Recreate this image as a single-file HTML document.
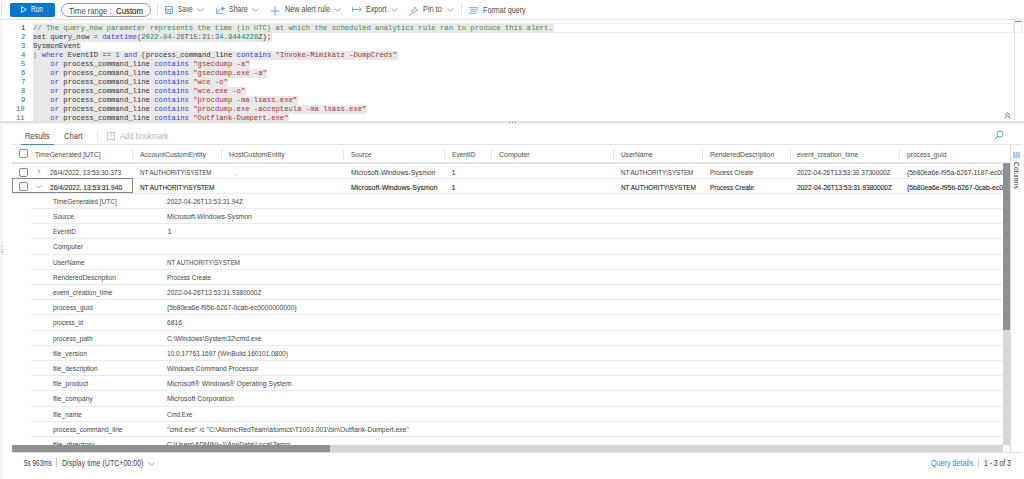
<!DOCTYPE html>
<html><head><meta charset="utf-8"><title>Logs</title>
<style>
html,body{margin:0;padding:0;width:1024px;height:479px;overflow:hidden;background:#fff;font-family:"Liberation Sans",sans-serif;color:#323130;position:relative}
.a{position:absolute;white-space:pre}
.b{position:absolute}
.m{font-family:"Liberation Mono",monospace}
</style></head><body>
<div class="b" style="left:1.00px;top:4.00px;width:1.00px;height:12.00px;background:#dddcdb"></div>
<div class="b" style="left:10.00px;top:3.00px;width:45.00px;height:14.00px;background:#0078d4;border-radius:2px"></div>
<svg class="b" style="left:20.5px;top:6px" width="6" height="7" viewBox="0 0 6 7"><path d="M0.6 0.6 L5.4 3.5 L0.6 6.4 Z" fill="none" stroke="#fff" stroke-width="0.9" stroke-linejoin="round"/></svg>
<div class="a" style="left:31.00px;top:2.76px;font-size:8.2px;line-height:14px;color:#fff;transform:scaleX(0.778);transform-origin:0 0;">Run</div>
<div class="b" style="left:61.00px;top:3.00px;width:89.50px;height:13.70px;border:1px solid #9a9896;border-radius:8px;box-sizing:border-box"></div>
<div class="a" style="left:68.70px;top:4.29px;font-size:8.4px;line-height:14px;color:#4a4948;transform:scaleX(0.910);transform-origin:0 0;">Time range :</div>
<div class="a" style="left:116.00px;top:4.29px;font-size:8.4px;line-height:14px;color:#323130;-webkit-text-stroke:0.15px #323130;transform:scaleX(0.932);transform-origin:0 0;">Custom</div>
<div class="b" style="left:156.50px;top:4.50px;width:1.00px;height:11.00px;background:#e1dfdd"></div>
<svg class="b" style="left:165px;top:5.8px" width="8" height="8" viewBox="0 0 8 8"><path d="M0.5 0.5 H7.5 V7.5 H0.5 Z M0.5 3.4 H7.5 M2.2 7.5 V5.4 H5.8 V7.5" fill="none" stroke="#5b9de0" stroke-width="0.9"/></svg>
<div class="a" style="left:178.10px;top:2.76px;font-size:8.2px;line-height:14px;color:#4a4948;transform:scaleX(0.787);transform-origin:0 0;">Save</div>
<svg class="b" style="left:197.2px;top:8.2px" width="7" height="4" viewBox="0 0 7 4"><path d="M0.5 0.5 L3.5 3.3 L6.5 0.5" fill="none" stroke="#8a8886" stroke-width="0.8"/></svg>
<svg class="b" style="left:215.8px;top:5.6px" width="9.5" height="8" viewBox="0 0 9.5 8"><path d="M0.5 2.5 V7.4 H7.5 M2.2 6 C2.6 3.8 4.4 2.7 7 2.7" fill="none" stroke="#5b9de0" stroke-width="0.9"/><path d="M5.6 0.4 L9.2 2.7 L5.6 5 Z" fill="#5b9de0"/></svg>
<div class="a" style="left:229.00px;top:2.76px;font-size:8.2px;line-height:14px;color:#4a4948;transform:scaleX(0.855);transform-origin:0 0;">Share</div>
<svg class="b" style="left:252.2px;top:8.2px" width="7" height="4" viewBox="0 0 7 4"><path d="M0.5 0.5 L3.5 3.3 L6.5 0.5" fill="none" stroke="#8a8886" stroke-width="0.8"/></svg>
<svg class="b" style="left:270px;top:5.5px" width="10" height="10" viewBox="0 0 10 10"><path d="M5 0.5 V9.5 M0.5 5 H9.5" fill="none" stroke="#5b9de0" stroke-width="0.9"/></svg>
<div class="a" style="left:284.50px;top:2.76px;font-size:8.2px;line-height:14px;color:#4a4948;transform:scaleX(0.891);transform-origin:0 0;">New alert rule</div>
<svg class="b" style="left:334.4px;top:8.2px" width="7" height="4" viewBox="0 0 7 4"><path d="M0.5 0.5 L3.5 3.3 L6.5 0.5" fill="none" stroke="#8a8886" stroke-width="0.8"/></svg>
<svg class="b" style="left:352px;top:7.2px" width="10" height="5" viewBox="0 0 10 5"><path d="M0.5 0.3 V4.7 M0.5 2.5 H9.2 M7 0.4 L9.2 2.5 L7 4.6" fill="none" stroke="#5b9de0" stroke-width="0.85"/></svg>
<div class="a" style="left:366.20px;top:2.76px;font-size:8.2px;line-height:14px;color:#4a4948;transform:scaleX(0.866);transform-origin:0 0;">Export</div>
<svg class="b" style="left:391.0px;top:8.2px" width="7" height="4" viewBox="0 0 7 4"><path d="M0.5 0.5 L3.5 3.3 L6.5 0.5" fill="none" stroke="#8a8886" stroke-width="0.8"/></svg>
<svg class="b" style="left:409px;top:5.5px" width="10" height="10" viewBox="0 0 10 10"><path d="M0.5 9.5 L3.5 6.5 M2 4.5 L5.5 8 M3 5.5 L6 2.5 L5.5 1 L9 4.5 L7.5 4 L4.5 7" fill="none" stroke="#5b9de0" stroke-width="0.9"/></svg>
<div class="a" style="left:423.00px;top:2.76px;font-size:8.2px;line-height:14px;color:#4a4948;transform:scaleX(0.898);transform-origin:0 0;">Pin to</div>
<svg class="b" style="left:446.8px;top:8.2px" width="7" height="4" viewBox="0 0 7 4"><path d="M0.5 0.5 L3.5 3.3 L6.5 0.5" fill="none" stroke="#8a8886" stroke-width="0.8"/></svg>
<div class="b" style="left:460.60px;top:4.60px;width:1.00px;height:10.60px;background:#e1dfdd"></div>
<svg class="b" style="left:468px;top:6.5px" width="11" height="7" viewBox="0 0 11 7"><path d="M0.5 0.6 H10.5 M2.5 2.4 H10 M2.5 4.2 H8.5 M0.5 6.2 H8.5" fill="none" stroke="#5b9de0" stroke-width="0.8"/></svg>
<div class="a" style="left:483.00px;top:3.76px;font-size:8.2px;line-height:14px;color:#4a4948;transform:scaleX(0.877);transform-origin:0 0;">Format query</div>
<div class="b" style="left:0.00px;top:19.20px;width:1022.00px;height:1.00px;background:#e1dfdd"></div>
<div class="b" style="left:0.00px;top:20.20px;width:3.40px;height:458.80px;background:#f3f3f3"></div>
<div class="b" style="left:1014.00px;top:23.30px;width:8.00px;height:9.30px;border:1px solid #efefef;border-left:none;box-sizing:border-box"></div>
<div class="b" style="left:1014.00px;top:20.20px;width:1.00px;height:101.00px;background:#e1dfdd"></div>
<div class="b" style="left:1015.00px;top:21.00px;width:7.00px;height:1.00px;background:#8a8886"></div>
<div class="b" style="left:0;top:20.2px;width:1014px;height:101.0px;overflow:hidden">
<div class="b" style="left:33.40px;top:3.10px;width:980.60px;height:9.30px;border:1px solid #efefef;box-sizing:border-box"></div>
<div class="b" style="left:33.4px;top:3.50px;width:520.20px;height:9.0px;background:#e8e8e8"></div>
<div class="b" style="left:33.4px;top:12.50px;width:238.43px;height:9.0px;background:#e8e8e8"></div>
<div class="b" style="left:33.4px;top:21.50px;width:47.69px;height:9.0px;background:#e8e8e8"></div>
<div class="b" style="left:33.4px;top:30.50px;width:364.14px;height:9.0px;background:#e8e8e8"></div>
<div class="b" style="left:33.4px;top:39.50px;width:216.75px;height:9.0px;background:#e8e8e8"></div>
<div class="b" style="left:33.4px;top:48.50px;width:234.09px;height:9.0px;background:#e8e8e8"></div>
<div class="b" style="left:33.4px;top:57.50px;width:195.07px;height:9.0px;background:#e8e8e8"></div>
<div class="b" style="left:33.4px;top:66.50px;width:212.41px;height:9.0px;background:#e8e8e8"></div>
<div class="b" style="left:33.4px;top:75.50px;width:264.44px;height:9.0px;background:#e8e8e8"></div>
<div class="b" style="left:33.4px;top:84.50px;width:333.80px;height:9.0px;background:#e8e8e8"></div>
<div class="b" style="left:33.4px;top:93.50px;width:255.76px;height:9.0px;background:#e8e8e8"></div>
<div class="a m" style="left:33.4px;top:3.00px;font-size:7.900px;line-height:9.0px;transform:scaleX(0.9144);transform-origin:0 0"><span style="color:#3f8f3f">// The query_now parameter represents the time (in UTC) at which the scheduled analytics rule ran to produce this alert.</span></div>
<div class="a m" style="left:20.66px;top:3.00px;font-size:7.900px;line-height:9.0px;color:#0b216f;transform:scaleX(0.9144);transform-origin:0 0">1</div>
<div class="a m" style="left:33.4px;top:12.00px;font-size:7.900px;line-height:9.0px;transform:scaleX(0.9144);transform-origin:0 0"><span style="color:#333">set query_now = </span><span style="color:#3b3bf2">datetime</span><span style="color:#333">(</span><span style="color:#0f8a6a">2022-04-26</span><span style="color:#333">T</span><span style="color:#0f8a6a">15</span><span style="color:#b03030">:</span><span style="color:#0f8a6a">21</span><span style="color:#b03030">:</span><span style="color:#0f8a6a">34.9444228</span><span style="color:#333">Z);</span></div>
<div class="a m" style="left:20.66px;top:12.00px;font-size:7.900px;line-height:9.0px;color:#237893;transform:scaleX(0.9144);transform-origin:0 0">2</div>
<div class="a m" style="left:33.4px;top:21.00px;font-size:7.900px;line-height:9.0px;transform:scaleX(0.9144);transform-origin:0 0"><span style="color:#333">SysmonEvent</span></div>
<div class="a m" style="left:20.66px;top:21.00px;font-size:7.900px;line-height:9.0px;color:#237893;transform:scaleX(0.9144);transform-origin:0 0">3</div>
<div class="a m" style="left:33.4px;top:30.00px;font-size:7.900px;line-height:9.0px;transform:scaleX(0.9144);transform-origin:0 0"><span style="color:#8050c0">| </span><span style="color:#3b3bf2">where</span><span style="color:#333"> EventID == </span><span style="color:#0f8a6a">1</span><span style="color:#333"> </span><span style="color:#3b3bf2">and</span><span style="color:#333"> (process_command_line </span><span style="color:#3b3bf2">contains</span><span style="color:#b03030"> &quot;Invoke-Mimikatz -DumpCreds&quot;</span></div>
<div class="a m" style="left:20.66px;top:30.00px;font-size:7.900px;line-height:9.0px;color:#237893;transform:scaleX(0.9144);transform-origin:0 0">4</div>
<div class="a m" style="left:33.4px;top:39.00px;font-size:7.900px;line-height:9.0px;transform:scaleX(0.9144);transform-origin:0 0"><span style="color:#333">    </span><span style="color:#3b3bf2">or</span><span style="color:#333"> process_command_line </span><span style="color:#3b3bf2">contains</span><span style="color:#b03030"> &quot;gsecdump -a&quot;</span></div>
<div class="a m" style="left:20.66px;top:39.00px;font-size:7.900px;line-height:9.0px;color:#237893;transform:scaleX(0.9144);transform-origin:0 0">5</div>
<div class="a m" style="left:33.4px;top:48.00px;font-size:7.900px;line-height:9.0px;transform:scaleX(0.9144);transform-origin:0 0"><span style="color:#333">    </span><span style="color:#3b3bf2">or</span><span style="color:#333"> process_command_line </span><span style="color:#3b3bf2">contains</span><span style="color:#b03030"> &quot;gsecdump.exe -a&quot;</span></div>
<div class="a m" style="left:20.66px;top:48.00px;font-size:7.900px;line-height:9.0px;color:#237893;transform:scaleX(0.9144);transform-origin:0 0">6</div>
<div class="a m" style="left:33.4px;top:57.00px;font-size:7.900px;line-height:9.0px;transform:scaleX(0.9144);transform-origin:0 0"><span style="color:#333">    </span><span style="color:#3b3bf2">or</span><span style="color:#333"> process_command_line </span><span style="color:#3b3bf2">contains</span><span style="color:#b03030"> &quot;wce -o&quot;</span></div>
<div class="a m" style="left:20.66px;top:57.00px;font-size:7.900px;line-height:9.0px;color:#237893;transform:scaleX(0.9144);transform-origin:0 0">7</div>
<div class="a m" style="left:33.4px;top:66.00px;font-size:7.900px;line-height:9.0px;transform:scaleX(0.9144);transform-origin:0 0"><span style="color:#333">    </span><span style="color:#3b3bf2">or</span><span style="color:#333"> process_command_line </span><span style="color:#3b3bf2">contains</span><span style="color:#b03030"> &quot;wce.exe -o&quot;</span></div>
<div class="a m" style="left:20.66px;top:66.00px;font-size:7.900px;line-height:9.0px;color:#237893;transform:scaleX(0.9144);transform-origin:0 0">8</div>
<div class="a m" style="left:33.4px;top:75.00px;font-size:7.900px;line-height:9.0px;transform:scaleX(0.9144);transform-origin:0 0"><span style="color:#333">    </span><span style="color:#3b3bf2">or</span><span style="color:#333"> process_command_line </span><span style="color:#3b3bf2">contains</span><span style="color:#b03030"> &quot;procdump -ma lsass.exe&quot;</span></div>
<div class="a m" style="left:20.66px;top:75.00px;font-size:7.900px;line-height:9.0px;color:#237893;transform:scaleX(0.9144);transform-origin:0 0">9</div>
<div class="a m" style="left:33.4px;top:84.00px;font-size:7.900px;line-height:9.0px;transform:scaleX(0.9144);transform-origin:0 0"><span style="color:#333">    </span><span style="color:#3b3bf2">or</span><span style="color:#333"> process_command_line </span><span style="color:#3b3bf2">contains</span><span style="color:#b03030"> &quot;procdump.exe -accepteula -ma lsass.exe&quot;</span></div>
<div class="a m" style="left:16.33px;top:84.00px;font-size:7.900px;line-height:9.0px;color:#237893;transform:scaleX(0.9144);transform-origin:0 0">10</div>
<div class="a m" style="left:33.4px;top:93.00px;font-size:7.900px;line-height:9.0px;transform:scaleX(0.9144);transform-origin:0 0"><span style="color:#333">    </span><span style="color:#3b3bf2">or</span><span style="color:#333"> process_command_line </span><span style="color:#3b3bf2">contains</span><span style="color:#b03030"> &quot;Outflank-Dumpert.exe&quot;</span></div>
<div class="a m" style="left:16.33px;top:93.00px;font-size:7.900px;line-height:9.0px;color:#237893;transform:scaleX(0.9144);transform-origin:0 0">11</div>
</div>
<svg class="b" style="left:1003.5px;top:111.5px" width="7" height="7" viewBox="0 0 7 7"><path d="M0.8 3.5 L3.5 1 L6.2 3.5 M0.8 6.2 L3.5 3.7 L6.2 6.2" fill="none" stroke="#605e5c" stroke-width="0.9"/></svg>
<div class="b" style="left:0;top:121.2px;width:1024px;height:3.6px;background:linear-gradient(#dadada,#f2f2f2 70%,#fff)"></div>
<div class="b" style="left:508.60px;top:122.00px;width:1.20px;height:1.20px;background:#7a7a7a;border-radius:1px"></div>
<div class="b" style="left:511.70px;top:122.00px;width:1.20px;height:1.20px;background:#7a7a7a;border-radius:1px"></div>
<div class="b" style="left:514.70px;top:122.00px;width:1.20px;height:1.20px;background:#7a7a7a;border-radius:1px"></div>
<div class="b" style="left:0.90px;top:245.70px;width:2.10px;height:1.40px;background:#c6c6c6"></div>
<div class="b" style="left:0.90px;top:248.60px;width:2.10px;height:1.40px;background:#c6c6c6"></div>
<div class="b" style="left:0.90px;top:251.40px;width:2.10px;height:1.40px;background:#c6c6c6"></div>
<div class="a" style="left:25.30px;top:129.49px;font-size:8.4px;line-height:14px;color:#484644;transform:scaleX(0.884);transform-origin:0 0;">Results</div>
<div class="a" style="left:63.80px;top:129.49px;font-size:8.4px;line-height:14px;color:#484644;transform:scaleX(0.908);transform-origin:0 0;">Chart</div>
<div class="b" style="left:97.20px;top:130.70px;width:1.00px;height:10.90px;background:#e6e4e2"></div>
<svg class="b" style="left:106.6px;top:132.2px" width="8" height="9" viewBox="0 0 8 9"><path d="M0.5 0.5 H7.5 V8.5 L4 6.6 L0.5 8.5 Z" fill="none" stroke="#c0bebc" stroke-width="0.9"/><circle cx="4" cy="3.2" r="1.2" fill="none" stroke="#c0bebc" stroke-width="0.7"/></svg>
<div class="a" style="left:119.70px;top:129.49px;font-size:8.4px;line-height:14px;color:#b8b6b4;transform:scaleX(0.894);transform-origin:0 0;">Add bookmark</div>
<svg class="b" style="left:993.5px;top:130px" width="10" height="10" viewBox="0 0 10 10"><circle cx="6" cy="4" r="3.1" fill="none" stroke="#4596de" stroke-width="0.9"/><path d="M3.8 6.2 L0.7 9.3" stroke="#4596de" stroke-width="1"/></svg>
<div class="b" style="left:12.00px;top:144.20px;width:1010.00px;height:1.00px;background:#e8e6e4"></div>
<div class="b" style="left:20.70px;top:143.70px;width:33.80px;height:1.50px;background:#3d8fdb"></div>
<div class="b" style="left:1010.00px;top:145.00px;width:1.00px;height:307.50px;background:#dcdcdc"></div>
<div class="b" style="left:12.00px;top:162.40px;width:991.00px;height:1.30px;background:#e1e2e3"></div>
<div class="b" style="left:0;top:0;width:1003px;height:479px;overflow:hidden">
<div class="a" style="left:34.80px;top:148.04px;font-size:7.4px;line-height:14px;color:#4e4d4c;transform:scaleX(0.906);transform-origin:0 0;">TimeGenerated [UTC]</div>
<div class="a" style="left:139.60px;top:148.04px;font-size:7.4px;line-height:14px;color:#4e4d4c;transform:scaleX(0.933);transform-origin:0 0;">AccountCustomEntity</div>
<div class="a" style="left:228.70px;top:148.04px;font-size:7.4px;line-height:14px;color:#4e4d4c;transform:scaleX(0.942);transform-origin:0 0;">HostCustomEntity</div>
<div class="a" style="left:350.50px;top:148.04px;font-size:7.4px;line-height:14px;color:#4e4d4c;transform:scaleX(0.875);transform-origin:0 0;">Source</div>
<div class="a" style="left:451.60px;top:148.04px;font-size:7.4px;line-height:14px;color:#4e4d4c;transform:scaleX(0.890);transform-origin:0 0;">EventID</div>
<div class="a" style="left:498.50px;top:148.04px;font-size:7.4px;line-height:14px;color:#4e4d4c;transform:scaleX(0.946);transform-origin:0 0;">Computer</div>
<div class="a" style="left:620.50px;top:148.04px;font-size:7.4px;line-height:14px;color:#4e4d4c;transform:scaleX(0.900);transform-origin:0 0;">UserName</div>
<div class="a" style="left:709.70px;top:148.04px;font-size:7.4px;line-height:14px;color:#4e4d4c;transform:scaleX(0.925);transform-origin:0 0;">RenderedDescription</div>
<div class="a" style="left:797.10px;top:148.04px;font-size:7.4px;line-height:14px;color:#4e4d4c;transform:scaleX(0.919);transform-origin:0 0;">event_creation_time</div>
<div class="a" style="left:907.00px;top:148.04px;font-size:7.4px;line-height:14px;color:#4e4d4c;transform:scaleX(0.896);transform-origin:0 0;">process_guid</div>
<div class="b" style="left:132.10px;top:150.00px;width:1.00px;height:8.50px;background:#e1dfdd"></div>
<div class="b" style="left:221.00px;top:150.00px;width:1.00px;height:8.50px;background:#e1dfdd"></div>
<div class="b" style="left:342.70px;top:150.00px;width:1.00px;height:8.50px;background:#e1dfdd"></div>
<div class="b" style="left:443.80px;top:150.00px;width:1.00px;height:8.50px;background:#e1dfdd"></div>
<div class="b" style="left:491.20px;top:150.00px;width:1.00px;height:8.50px;background:#e1dfdd"></div>
<div class="b" style="left:612.90px;top:150.00px;width:1.00px;height:8.50px;background:#e1dfdd"></div>
<div class="b" style="left:701.60px;top:150.00px;width:1.00px;height:8.50px;background:#e1dfdd"></div>
<div class="b" style="left:789.80px;top:150.00px;width:1.00px;height:8.50px;background:#e1dfdd"></div>
<div class="b" style="left:899.10px;top:150.00px;width:1.00px;height:8.50px;background:#e1dfdd"></div>
<div class="b" style="left:18.50px;top:149.40px;width:9.10px;height:9.00px;border:1px solid #8a8886;border-radius:2px;box-sizing:border-box"></div>
<div class="b" style="left:18.50px;top:167.80px;width:9.10px;height:9.00px;border:1px solid #8a8886;border-radius:2px;box-sizing:border-box"></div>
<svg class="b" style="left:36.6px;top:168.9px" width="4" height="5" viewBox="0 0 4 5"><path d="M0.6 0.4 L3.2 2.5 L0.6 4.6" fill="none" stroke="#797775" stroke-width="0.75"/></svg>
<div class="a" style="left:50.30px;top:165.70px;font-size:7.5px;line-height:14px;color:#3b3a39;transform:scaleX(0.875);transform-origin:0 0;">26/4/2022, 13:53:30.373</div>
<div class="a" style="left:139.60px;top:165.70px;font-size:7.5px;line-height:14px;color:#3b3a39;transform:scaleX(0.813);transform-origin:0 0;">NT AUTHORITY\SYSTEM</div>
<div class="a" style="left:350.50px;top:165.70px;font-size:7.5px;line-height:14px;color:#3b3a39;transform:scaleX(0.908);transform-origin:0 0;">Microsoft-Windows-Sysmon</div>
<div class="a" style="left:451.60px;top:165.70px;font-size:7.5px;line-height:14px;color:#3b3a39;">1</div>
<div class="a" style="left:620.50px;top:165.70px;font-size:7.5px;line-height:14px;color:#3b3a39;transform:scaleX(0.822);transform-origin:0 0;">NT AUTHORITY\SYSTEM</div>
<div class="a" style="left:709.70px;top:165.70px;font-size:7.5px;line-height:14px;color:#3b3a39;transform:scaleX(0.834);transform-origin:0 0;">Process Create</div>
<div class="a" style="left:797.10px;top:165.70px;font-size:7.5px;line-height:14px;color:#3b3a39;transform:scaleX(0.866);transform-origin:0 0;">2022-04-26T13:53:30.3730000Z</div>
<div class="a" style="left:907.00px;top:165.70px;font-size:7.5px;line-height:14px;color:#3b3a39;transform:scaleX(0.892);transform-origin:0 0;">{5b80ea6e-f95a-6267-1187-ec0000000000}</div>
<div class="b" style="left:12.00px;top:177.50px;width:991.00px;height:1.00px;background:#edebe9"></div>
<div class="b" style="left:234.80px;top:174.60px;width:1.00px;height:1.00px;background:#c8c6c4"></div>
<div class="b" style="left:18.50px;top:182.40px;width:9.10px;height:9.00px;border:1px solid #8a8886;border-radius:2px;box-sizing:border-box"></div>
<svg class="b" style="left:36px;top:184.6px" width="5.5" height="3.6" viewBox="0 0 5.5 3.6"><path d="M0.4 0.5 L2.75 3 L5.1 0.5" fill="none" stroke="#797775" stroke-width="0.75"/></svg>
<div class="a" style="left:50.30px;top:181.00px;font-size:7.5px;line-height:14px;color:#201f1e;-webkit-text-stroke:0.1px #201f1e;transform:scaleX(0.887);transform-origin:0 0;">26/4/2022, 13:53:31.940</div>
<div class="a" style="left:139.60px;top:181.00px;font-size:7.5px;line-height:14px;color:#201f1e;-webkit-text-stroke:0.1px #201f1e;transform:scaleX(0.847);transform-origin:0 0;">NT AUTHORITY\SYSTEM</div>
<div class="a" style="left:350.50px;top:181.00px;font-size:7.5px;line-height:14px;color:#201f1e;-webkit-text-stroke:0.1px #201f1e;transform:scaleX(0.931);transform-origin:0 0;">Microsoft-Windows-Sysmon</div>
<div class="a" style="left:451.60px;top:181.00px;font-size:7.5px;line-height:14px;color:#201f1e;-webkit-text-stroke:0.1px #201f1e;">1</div>
<div class="a" style="left:620.50px;top:181.00px;font-size:7.5px;line-height:14px;color:#201f1e;-webkit-text-stroke:0.1px #201f1e;transform:scaleX(0.853);transform-origin:0 0;">NT AUTHORITY\SYSTEM</div>
<div class="a" style="left:709.70px;top:181.00px;font-size:7.5px;line-height:14px;color:#201f1e;-webkit-text-stroke:0.1px #201f1e;transform:scaleX(0.853);transform-origin:0 0;">Process Create</div>
<div class="a" style="left:797.10px;top:181.00px;font-size:7.5px;line-height:14px;color:#201f1e;-webkit-text-stroke:0.1px #201f1e;transform:scaleX(0.880);transform-origin:0 0;">2022-04-26T13:53:31.9380000Z</div>
<div class="a" style="left:907.00px;top:181.00px;font-size:7.5px;line-height:14px;color:#201f1e;-webkit-text-stroke:0.1px #201f1e;transform:scaleX(0.910);transform-origin:0 0;">{5b80ea6e-f95b-6267-0cab-ec0000000000}</div>
<div class="b" style="left:12.00px;top:192.60px;width:991.00px;height:1.00px;background:#edebe9"></div>
<div class="b" style="left:12.00px;top:178.30px;width:120.80px;height:14.70px;border:1px solid #858381;box-sizing:border-box"></div>
<div class="a" style="left:53.00px;top:194.84px;font-size:7.4px;line-height:14px;color:#464544;transform:scaleX(0.881);transform-origin:0 0;">TimeGenerated [UTC]</div>
<div class="a" style="left:167.40px;top:194.84px;font-size:7.4px;line-height:14px;color:#464544;transform:scaleX(0.885);transform-origin:0 0;">2022-04-26T13:53:31.94Z</div>
<div class="b" style="left:30.50px;top:208.00px;width:972.50px;height:1.00px;background:#edebe9"></div>
<div class="a" style="left:53.00px;top:210.04px;font-size:7.4px;line-height:14px;color:#464544;transform:scaleX(0.897);transform-origin:0 0;">Source</div>
<div class="a" style="left:167.40px;top:210.04px;font-size:7.4px;line-height:14px;color:#464544;transform:scaleX(0.927);transform-origin:0 0;">Microsoft-Windows-Sysmon</div>
<div class="b" style="left:30.50px;top:223.20px;width:972.50px;height:1.00px;background:#edebe9"></div>
<div class="a" style="left:53.00px;top:225.24px;font-size:7.4px;line-height:14px;color:#464544;transform:scaleX(0.875);transform-origin:0 0;">EventID</div>
<div class="a" style="left:167.40px;top:225.24px;font-size:7.4px;line-height:14px;color:#464544;">1</div>
<div class="b" style="left:30.50px;top:238.40px;width:972.50px;height:1.00px;background:#edebe9"></div>
<div class="a" style="left:53.00px;top:240.44px;font-size:7.4px;line-height:14px;color:#464544;transform:scaleX(0.924);transform-origin:0 0;">Computer</div>
<div class="b" style="left:30.50px;top:253.60px;width:972.50px;height:1.00px;background:#edebe9"></div>
<div class="a" style="left:53.00px;top:255.64px;font-size:7.4px;line-height:14px;color:#464544;transform:scaleX(0.894);transform-origin:0 0;">UserName</div>
<div class="a" style="left:167.40px;top:255.64px;font-size:7.4px;line-height:14px;color:#464544;transform:scaleX(0.844);transform-origin:0 0;">NT AUTHORITY\SYSTEM</div>
<div class="b" style="left:30.50px;top:268.80px;width:972.50px;height:1.00px;background:#edebe9"></div>
<div class="a" style="left:53.00px;top:270.84px;font-size:7.4px;line-height:14px;color:#464544;transform:scaleX(0.907);transform-origin:0 0;">RenderedDescription</div>
<div class="a" style="left:167.40px;top:270.84px;font-size:7.4px;line-height:14px;color:#464544;transform:scaleX(0.864);transform-origin:0 0;">Process Create</div>
<div class="b" style="left:30.50px;top:284.00px;width:972.50px;height:1.00px;background:#edebe9"></div>
<div class="a" style="left:53.00px;top:286.04px;font-size:7.4px;line-height:14px;color:#464544;transform:scaleX(0.891);transform-origin:0 0;">event_creation_time</div>
<div class="a" style="left:167.40px;top:286.04px;font-size:7.4px;line-height:14px;color:#464544;transform:scaleX(0.888);transform-origin:0 0;">2022-04-26T13:53:31.9380000Z</div>
<div class="b" style="left:30.50px;top:299.20px;width:972.50px;height:1.00px;background:#edebe9"></div>
<div class="a" style="left:53.00px;top:301.24px;font-size:7.4px;line-height:14px;color:#464544;transform:scaleX(0.901);transform-origin:0 0;">process_guid</div>
<div class="a" style="left:167.40px;top:301.24px;font-size:7.4px;line-height:14px;color:#464544;transform:scaleX(0.904);transform-origin:0 0;">{5b80ea6e-f95b-6267-0cab-ec0000000000}</div>
<div class="b" style="left:30.50px;top:314.40px;width:972.50px;height:1.00px;background:#edebe9"></div>
<div class="a" style="left:53.00px;top:316.44px;font-size:7.4px;line-height:14px;color:#464544;transform:scaleX(0.839);transform-origin:0 0;">process_id</div>
<div class="a" style="left:167.40px;top:316.44px;font-size:7.4px;line-height:14px;color:#464544;transform:scaleX(0.912);transform-origin:0 0;">6816</div>
<div class="b" style="left:30.50px;top:329.60px;width:972.50px;height:1.00px;background:#edebe9"></div>
<div class="a" style="left:53.00px;top:331.64px;font-size:7.4px;line-height:14px;color:#464544;transform:scaleX(0.892);transform-origin:0 0;">process_path</div>
<div class="a" style="left:167.40px;top:331.64px;font-size:7.4px;line-height:14px;color:#464544;transform:scaleX(0.906);transform-origin:0 0;">C:\Windows\System32\cmd.exe</div>
<div class="b" style="left:30.50px;top:344.80px;width:972.50px;height:1.00px;background:#edebe9"></div>
<div class="a" style="left:53.00px;top:346.84px;font-size:7.4px;line-height:14px;color:#464544;transform:scaleX(0.907);transform-origin:0 0;">file_version</div>
<div class="a" style="left:167.40px;top:346.84px;font-size:7.4px;line-height:14px;color:#464544;transform:scaleX(0.883);transform-origin:0 0;">10.0.17763.1697 (WinBuild.160101.0800)</div>
<div class="b" style="left:30.50px;top:360.00px;width:972.50px;height:1.00px;background:#edebe9"></div>
<div class="a" style="left:53.00px;top:362.04px;font-size:7.4px;line-height:14px;color:#464544;transform:scaleX(0.908);transform-origin:0 0;">file_description</div>
<div class="a" style="left:167.40px;top:362.04px;font-size:7.4px;line-height:14px;color:#464544;transform:scaleX(0.901);transform-origin:0 0;">Windows Command Processor</div>
<div class="b" style="left:30.50px;top:375.20px;width:972.50px;height:1.00px;background:#edebe9"></div>
<div class="a" style="left:53.00px;top:377.24px;font-size:7.4px;line-height:14px;color:#464544;transform:scaleX(0.921);transform-origin:0 0;">file_product</div>
<div class="a" style="left:167.40px;top:377.24px;font-size:7.4px;line-height:14px;color:#464544;transform:scaleX(0.928);transform-origin:0 0;">Microsoft® Windows® Operating System</div>
<div class="b" style="left:30.50px;top:390.40px;width:972.50px;height:1.00px;background:#edebe9"></div>
<div class="a" style="left:53.00px;top:392.44px;font-size:7.4px;line-height:14px;color:#464544;transform:scaleX(0.909);transform-origin:0 0;">file_company</div>
<div class="a" style="left:167.40px;top:392.44px;font-size:7.4px;line-height:14px;color:#464544;transform:scaleX(0.945);transform-origin:0 0;">Microsoft Corporation</div>
<div class="b" style="left:30.50px;top:405.60px;width:972.50px;height:1.00px;background:#edebe9"></div>
<div class="a" style="left:53.00px;top:407.64px;font-size:7.4px;line-height:14px;color:#464544;transform:scaleX(0.892);transform-origin:0 0;">file_name</div>
<div class="a" style="left:167.40px;top:407.64px;font-size:7.4px;line-height:14px;color:#464544;transform:scaleX(0.839);transform-origin:0 0;">Cmd.Exe</div>
<div class="b" style="left:30.50px;top:420.80px;width:972.50px;height:1.00px;background:#edebe9"></div>
<div class="a" style="left:53.00px;top:422.84px;font-size:7.4px;line-height:14px;color:#464544;transform:scaleX(0.890);transform-origin:0 0;">process_command_line</div>
<div class="a" style="left:167.40px;top:422.84px;font-size:7.4px;line-height:14px;color:#464544;transform:scaleX(0.919);transform-origin:0 0;">&quot;cmd.exe&quot; /c &quot;C:\AtomicRedTeam\atomics\T1003.001\bin\Outflank-Dumpert.exe&quot;</div>
<div class="b" style="left:30.50px;top:436.00px;width:972.50px;height:1.00px;background:#edebe9"></div>
<div class="a" style="left:53.00px;top:438.04px;font-size:7.4px;line-height:14px;color:#464544;transform:scaleX(0.993);transform-origin:0 0;">file_directory</div>
<div class="a" style="left:167.40px;top:438.04px;font-size:7.4px;line-height:14px;color:#464544;transform:scaleX(0.900);transform-origin:0 0;">C:\Users\ADMINI~1\AppData\Local\Temp\</div>
<div class="b" style="left:30.50px;top:451.20px;width:972.50px;height:1.00px;background:#edebe9"></div>
</div>
<div class="b" style="left:1003.00px;top:163.30px;width:7.30px;height:281.70px;background:#d6d6d6"></div>
<div class="b" style="left:1003.00px;top:163.30px;width:7.30px;height:167.10px;background:#8e9194"></div>
<svg class="b" style="left:1013px;top:151.8px" width="7.2" height="6" viewBox="0 0 7.2 6"><rect x="0" y="0" width="7.2" height="6" fill="#9cc8f0"/><path d="M2.4 0 V6 M4.8 0 V6" stroke="#fff" stroke-width="0.5"/></svg>
<div class="a" style="left:1012.2px;top:162px;font-size:6.8px;line-height:8px;color:#323130;writing-mode:vertical-rl">Columns</div>
<div class="b" style="left:11.70px;top:444.70px;width:991.30px;height:7.50px;background:#d6d6d6"></div>
<div class="b" style="left:11.70px;top:444.70px;width:318.30px;height:7.50px;background:#8e9194"></div>
<div class="b" style="left:1003.00px;top:445.00px;width:7.30px;height:7.20px;background:#fff"></div>
<div class="b" style="left:12.00px;top:452.10px;width:1010.00px;height:1.00px;background:#e1dfdd"></div>
<div class="a" style="left:23.60px;top:456.76px;font-size:8.2px;line-height:14px;color:#3b3a39;transform:scaleX(0.783);transform-origin:0 0;">5s 963ms</div>
<div class="b" style="left:56.30px;top:457.60px;width:1.00px;height:9.80px;background:#c8c6c4"></div>
<div class="a" style="left:61.50px;top:456.76px;font-size:8.2px;line-height:14px;color:#484644;transform:scaleX(0.863);transform-origin:0 0;">Display time (UTC+00:00)</div>
<svg class="b" style="left:148.3px;top:462px" width="7" height="4" viewBox="0 0 7 4"><path d="M0.5 0.5 L3.5 3.3 L6.5 0.5" fill="none" stroke="#8a8886" stroke-width="0.8"/></svg>
<div class="a" style="left:930.60px;top:457.06px;font-size:8.2px;line-height:14px;color:#2b88d8;transform:scaleX(0.875);transform-origin:0 0;">Query details</div>
<div class="b" style="left:978.40px;top:457.60px;width:1.00px;height:10.40px;background:#d2d0ce"></div>
<div class="a" style="left:984.00px;top:457.06px;font-size:8.2px;line-height:14px;color:#323130;transform:scaleX(0.829);transform-origin:0 0;">1 - 3 of 3</div>
</body></html>
